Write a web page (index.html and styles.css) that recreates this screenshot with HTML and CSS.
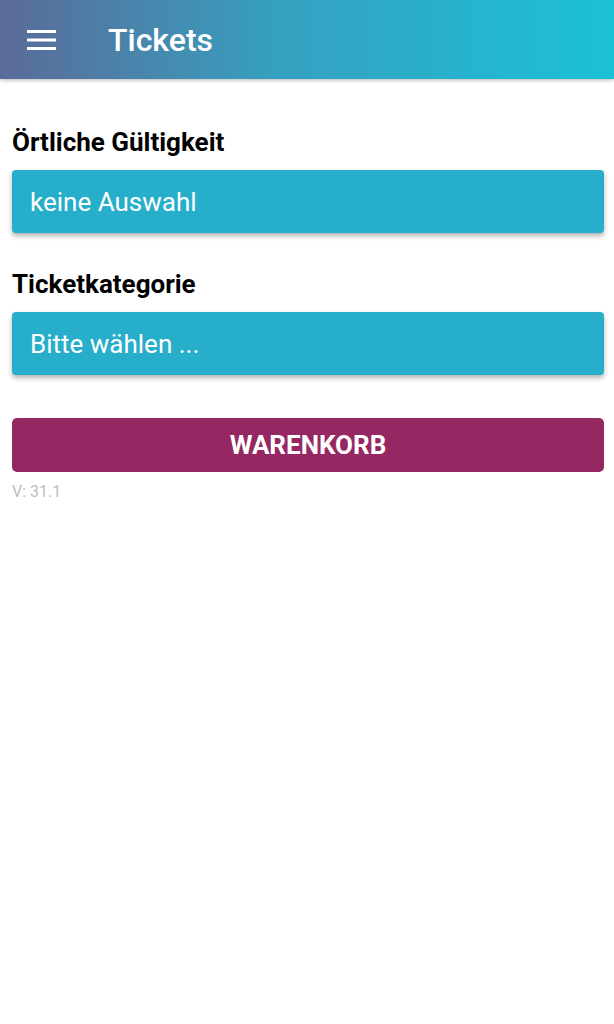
FILE: index.html
```html
<!DOCTYPE html>
<html lang="de">
<head>
  <meta charset="UTF-8" />
  <meta name="viewport" content="width=device-width, initial-scale=1.0"/>
  <title>Tickets</title>
  <link rel="stylesheet" href="styles.css">
</head>
<body>

  <!-- Toolbar -->
  <header class="toolbar">
    <button class="menu-btn" title="Menü">
      <svg width="29" height="20" viewBox="0 0 29 20">
        <rect x="0" y="0" width="29" height="3" fill="#fff"/>
        <rect x="0" y="8.5" width="29" height="3" fill="#fff"/>
        <rect x="0" y="17" width="29" height="3" fill="#fff"/>
      </svg>
    </button>
    <h1>Tickets</h1>
  </header>

  <main class="content">
    <label class="field-label">Örtliche Gültigkeit</label>
    <div class="select-box">keine Auswahl</div>

    <label class="field-label">Ticketkategorie</label>
    <div class="select-box">Bitte wählen ...</div>

    <button class="cart-btn">WARENKORB</button>
    <div class="version">V: 31.1</div>
  </main>

</body>
</html>
```

FILE: styles.css
```css
:root {
  --box-bg: #27aeca;
  --cart-bg: #952762;
  --muted: #bdbdbd;
}

body {
  font-family: Roboto, 'Noto Sans', sans-serif;
  background-color: #fff;
  color: #000;
  margin: 0;
  padding: 0;
}

.toolbar {
  display: flex;
  align-items: center;
  height: 79px;
  background: linear-gradient(to right, #5b6a98, #36a0c0 45%, #1bc1d7);
  box-shadow: 0 1px 4px rgba(0, 0, 0, 0.3);
}

.menu-btn {
  display: flex;
  background: none;
  border: none;
  padding: 0;
  margin: 1px 0 0 27px;
  cursor: pointer;
}

.toolbar h1 {
  margin: 0 0 0 52px;
  color: #fff;
  font-size: 32px;
  font-weight: 500;
  line-height: 38px;
}

.content {
  display: flex;
  flex-direction: column;
  padding: 0 10px 0 12px;
}

.field-label {
  display: block;
  font-size: 26px;
  font-weight: 700;
  line-height: 30px;
  margin-top: 48px;
}

.field-label + .select-box {
  margin-top: 13px;
}

.select-box + .field-label {
  margin-top: 36px;
}

.select-box {
  display: flex;
  align-items: center;
  height: 63px;
  padding-left: 18px;
  background-color: var(--box-bg);
  color: #fff;
  font-size: 26px;
  line-height: 30px;
  border-radius: 4px;
  box-shadow: 0 3px 5px rgba(0, 0, 0, 0.3);
}

.cart-btn {
  margin-top: 43px;
  height: 54px;
  background-color: var(--cart-bg);
  color: #fff;
  border: none;
  border-radius: 5px;
  font-family: inherit;
  font-size: 26px;
  font-weight: 700;
  cursor: pointer;
}

.version {
  margin-top: 10px;
  font-size: 16px;
  line-height: 19px;
  color: var(--muted);
}
```
